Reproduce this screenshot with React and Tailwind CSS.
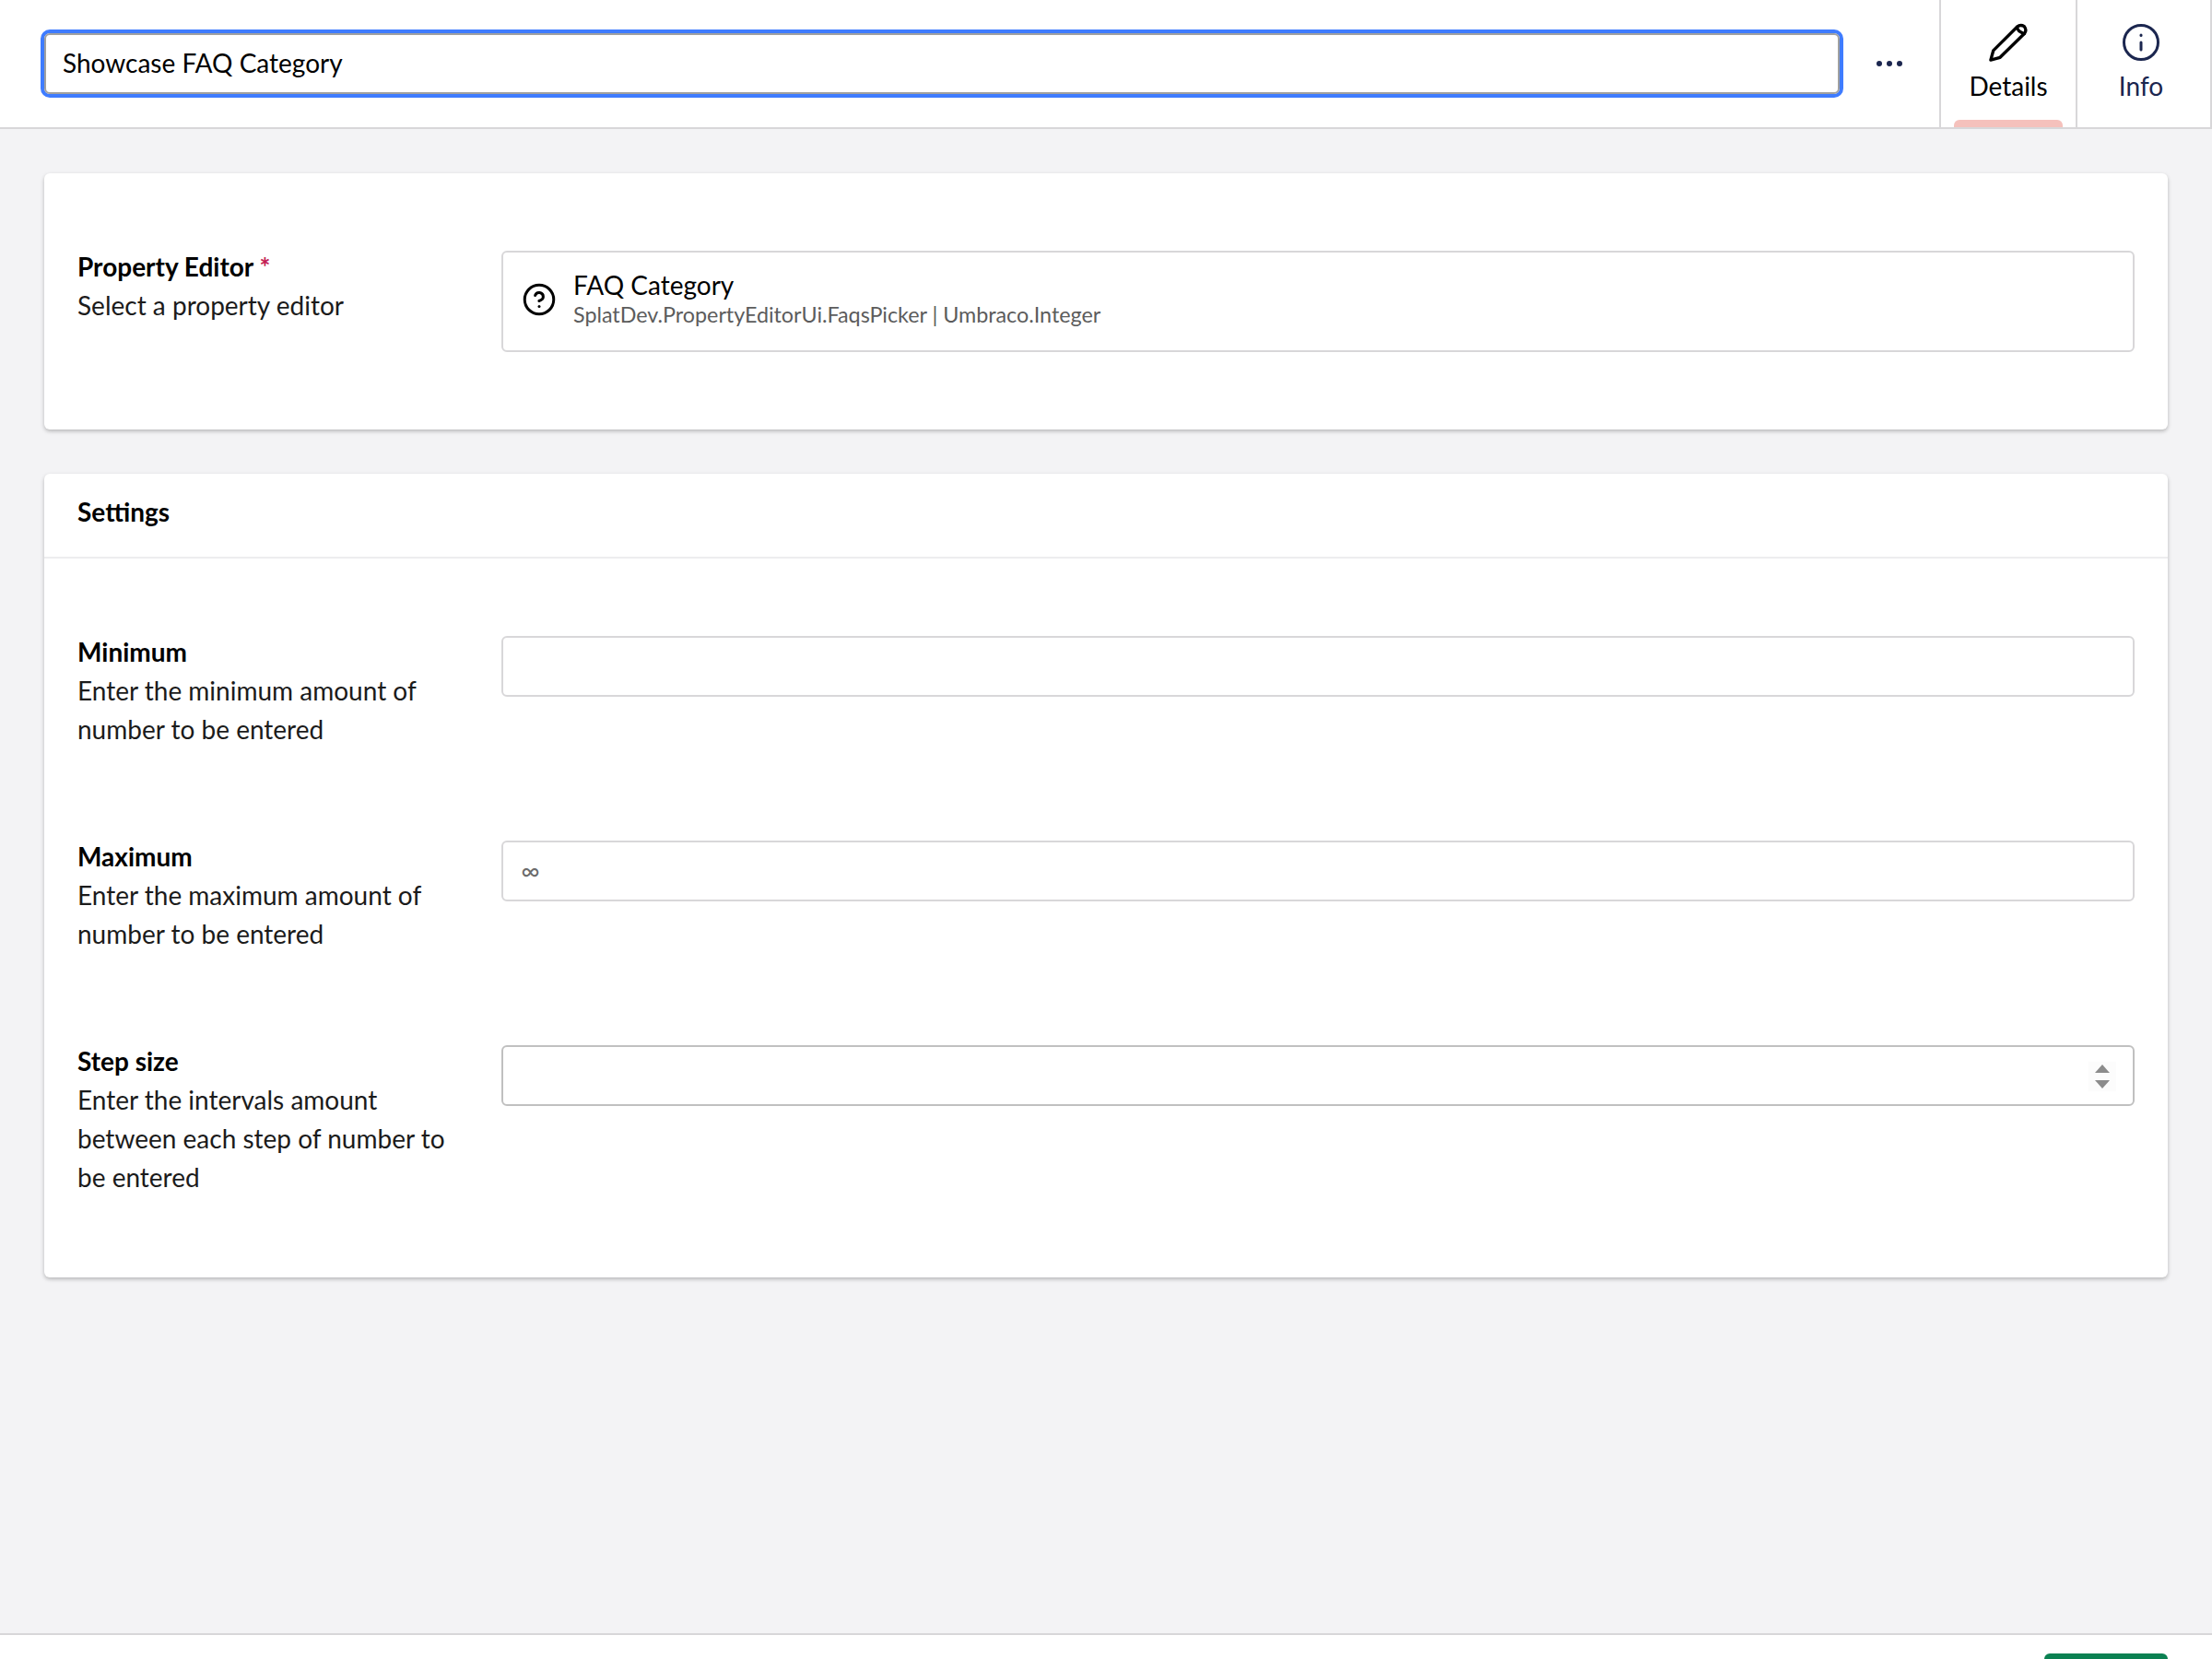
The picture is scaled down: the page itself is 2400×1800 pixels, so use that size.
import React from "react";

function Pencil() {
  return (
    <svg width="42" height="42" viewBox="0 0 40 40" fill="none" stroke="#000" strokeWidth="3.2" strokeLinejoin="round" strokeLinecap="round">
      <path d="M1.8 38.2 L4.5 28.5 L29 4 Q32.5 1 36.5 3.5 Q39.5 7.5 36.5 11 L11.5 35.5 Z" />
      <path d="M29 4 Q29.5 9 36.5 11" />
    </svg>
  );
}

function Row({ label, required, desc, children, className = "" }) {
  return (
    <div className={"flex " + className}>
      <div className="w-[460px] shrink-0 pr-[40px]">
        <div className="font-bold text-black">
          {label}
          {required && <span className="text-[#c41c55]"> *</span>}
        </div>
        <div className="text-[#1b1b1b]">{desc}</div>
      </div>
      <div className="flex-1 pt-[4px]">{children}</div>
    </div>
  );
}

function Box({ children, className = "" }) {
  return (
    <div className={"relative flex h-[66px] items-center rounded-[6px] border-2 bg-white px-[19px] " + className}>
      {children}
    </div>
  );
}

export default function App() {
  return (
    <div className="flex h-[1800px] w-[2400px] flex-col overflow-hidden bg-[#f3f3f5] font-['Lato',sans-serif] text-[28px] leading-[42px] text-black">
      <header className="flex h-[140px] shrink-0 items-stretch border-b-2 border-[#d8d7d9] bg-white">
        <div className="flex flex-1 items-center pl-[44px]">
          <div className="flex h-[74px] w-[1956px] items-center rounded-[10px] border-[4px] border-[#3f7cff]">
            <div className="flex h-full w-full items-center rounded-[6px] border-2 border-[#a0a0a0] pb-[3px] pl-[18px]">Showcase FAQ Category</div>
          </div>
          <div className="ml-[36px] flex gap-[5px]">
            <span className="h-[6px] w-[6px] rounded-full bg-[#1b264f]" />
            <span className="h-[6px] w-[6px] rounded-full bg-[#1b264f]" />
            <span className="h-[6px] w-[6px] rounded-full bg-[#1b264f]" />
          </div>
        </div>
        <div className="relative flex w-[148px] flex-col items-center border-l-2 border-[#d8d7d9] pt-[25px]">
          <Pencil />
          <span className="mt-[5px] leading-[42px]">Details</span>
          <span className="absolute bottom-0 left-[14px] h-[8px] w-[118px] rounded-t-[6px] bg-[#f5c1bc]" />
        </div>
        <div className="flex w-[148px] flex-col items-center border-x-2 border-[#d8d7d9] pt-[26px] pr-[6px] text-[#1b264f]">
          <svg width="40" height="40" viewBox="0 0 40 40" fill="none" stroke="#1b264f" strokeWidth="3" strokeLinecap="round">
            <circle cx="20" cy="20" r="18.5" />
            <path d="M20 20 V28" />
            <path d="M20 12 V12.5" />
          </svg>
          <span className="mt-[6px] leading-[42px]">Info</span>
        </div>
      </header>

      <main className="flex-1 px-[48px] pt-[48px]">
        <section className="rounded-[6px] bg-white px-[36px] pt-[80px] pb-[84px] shadow-[0_2px_4px_rgba(0,0,0,0.25)]">
          <Row label="Property Editor" required desc="Select a property editor">
            <div className="flex h-[110px] items-center rounded-[6px] border-2 border-[#d8d7d9] pb-[4px] pl-[21px]">
              <svg className="mr-[19px]" width="36" height="36" viewBox="0 0 24 24" fill="none" stroke="#000" strokeWidth="2" strokeLinecap="round" strokeLinejoin="round">
                <circle cx="12" cy="12" r="10.5" />
                <path d="M9.1 9a3 3 0 0 1 5.82 1c0 2-3 3-3 3" />
                <path d="M12 17h.01" />
              </svg>
              <div className="pb-[2px]">
                <div className="leading-[34px]">FAQ Category</div>
                <div className="text-[23.3px] leading-[30px] text-[#5c5c5c]">SplatDev.PropertyEditorUi.FaqsPicker | Umbraco.Integer</div>
              </div>
            </div>
          </Row>
        </section>

        <section className="mt-[48px] rounded-[6px] bg-white shadow-[0_2px_4px_rgba(0,0,0,0.25)]">
          <div className="flex h-[92px] items-center border-b-2 border-[#ededef] px-[36px] pb-[8px] font-bold">Settings</div>
          <div className="px-[36px] pt-[80px] pb-[88px]">
            <Row className="pb-[96px]" label="Minimum" desc="Enter the minimum amount of number to be entered">
              <Box className="border-[#d8d7d9]" />
            </Row>
            <Row className="pb-[96px]" label="Maximum" desc="Enter the maximum amount of number to be entered">
              <Box className="border-[#d8d7d9] pb-[3px] text-[28px] text-[#6b6b6b]">∞</Box>
            </Row>
            <Row label="Step size" desc="Enter the intervals amount between each step of number to be entered">
              <Box className="border-[#c0c0c0]">
                <div className="absolute top-[16px] right-[18px] flex h-[32px] w-[30px] flex-col items-center justify-center gap-[8px] bg-[#fcfcfc]">
                  <span className="h-0 w-0 border-x-[8px] border-b-[9px] border-x-transparent border-b-[#8c8c8c]" />
                  <span className="h-0 w-0 border-x-[8px] border-t-[9px] border-x-transparent border-t-[#8c8c8c]" />
                </div>
              </Box>
            </Row>
          </div>
        </section>
      </main>

      <footer className="relative h-[28px] shrink-0 border-t-2 border-[#d8d7d9] bg-white">
        <div className="absolute top-[20px] right-[48px] h-[60px] w-[134px] rounded-[6px] bg-[#0b8152]" />
      </footer>
    </div>
  );
}
